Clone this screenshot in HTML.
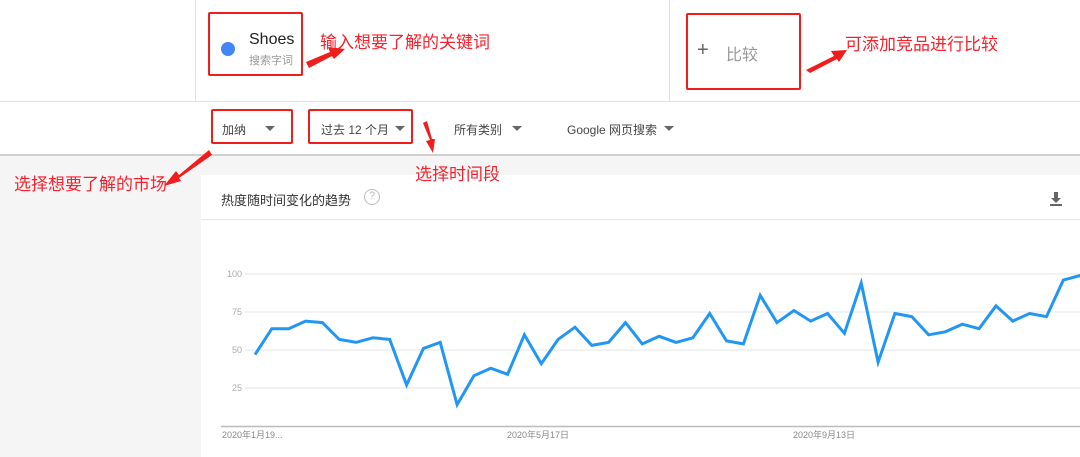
<!DOCTYPE html>
<html><head><meta charset="utf-8"><style>
*{margin:0;padding:0;box-sizing:border-box}
body{width:1080px;height:457px;overflow:hidden;background:#fff;position:relative;font-family:"Liberation Sans","Noto Sans CJK SC",sans-serif;color:#333}
.a{position:absolute;white-space:nowrap}
.red{color:#f5222d;font-size:17px}
.box{position:absolute;border:2px solid #f01d1d;border-radius:2px}
.f{font-size:12px;color:#444}
.tri{position:absolute;width:0;height:0;border-left:5px solid transparent;border-right:5px solid transparent;border-top:5px solid #666}
</style></head><body>
<div class="a" style="left:195px;top:0;width:1px;height:101px;background:#e0e0e0"></div>
<div class="a" style="left:669px;top:0;width:1px;height:101px;background:#e0e0e0"></div>
<div class="a" style="left:0;top:101px;width:1080px;height:1px;background:#e0e0e0"></div>
<div class="a" style="left:0;top:154px;width:1080px;height:2px;background:#d0d0d0"></div>
<div class="a" style="left:0;top:156px;width:1080px;height:301px;background:#f5f5f5"></div>
<div class="a" style="left:201px;top:175px;width:879px;height:282px;background:#fff"></div>
<div class="a" style="left:201px;top:219px;width:879px;height:1px;background:#e6e6e6"></div>

<div class="a" style="left:221px;top:42px;width:14px;height:14px;border-radius:50%;background:#4285f4"></div>
<div class="a" style="left:249px;top:31px;font-size:16px;color:#222">Shoes</div>
<div class="a" style="left:249px;top:52px;font-size:11px;color:#999">搜索字词</div>
<div class="box" style="left:208px;top:12px;width:95px;height:64px"></div>
<div class="a red" style="left:320px;top:28px">输入想要了解的关键词</div>
<svg class="a" style="left:0;top:0" width="1080" height="200">
<polygon points="306,62 330,52 328,47 345,49 334,59 332,56 309,68" fill="#f01d1d"/>
<polygon points="806,70 834,56 831,51 847,50 839,62 837,59 810,73" fill="#f01d1d"/>
<polygon points="209,150 179,175 176,171 164,186 181,181 179,178 212,155" fill="#f01d1d"/>
<polygon points="423,123 430,140 426,141 433,153 435,139 432,139 427,121" fill="#f01d1d"/>
</svg>
<div class="a" style="left:697px;top:39px;font-size:20px;color:#666;font-weight:300">+</div>
<div class="a" style="left:726px;top:41px;font-size:16px;color:#999">比较</div>
<div class="box" style="left:686px;top:13px;width:115px;height:77px"></div>
<div class="a red" style="left:845px;top:30px">可添加竞品进行比较</div>

<div class="a f" style="left:222px;top:121px">加纳</div><div class="tri" style="left:265px;top:126px"></div>
<div class="box" style="left:211px;top:109px;width:82px;height:35px"></div>
<div class="a f" style="left:321px;top:121px">过去 12 个月</div><div class="tri" style="left:395px;top:126px"></div>
<div class="box" style="left:308px;top:109px;width:105px;height:35px"></div>
<div class="a f" style="left:454px;top:121px">所有类别</div><div class="tri" style="left:512px;top:126px"></div>
<div class="a f" style="left:567px;top:121px">Google 网页搜索</div><div class="tri" style="left:664px;top:126px"></div>
<div class="a red" style="left:14px;top:170px">选择想要了解的市场</div>
<div class="a red" style="left:415px;top:160px">选择时间段</div>

<div class="a" style="left:221px;top:190px;font-size:13px;color:#333">热度随时间变化的趋势</div>
<div class="a" style="left:364px;top:189px;width:16px;height:16px;border:1.5px solid #bbb;border-radius:50%;font-size:11px;color:#bbb;text-align:center;line-height:13px">?</div>
<svg class="a" style="left:1049px;top:191px" width="14" height="16"><path d="M5 1h4v6h3l-5 5-5-5h3z" fill="#666"/><rect x="1" y="13" width="12" height="2" fill="#666"/></svg>

<svg class="a" style="left:0;top:0" width="1080" height="457">
<g stroke="#e6e6e6" stroke-width="1">
<line x1="245" y1="274" x2="1080" y2="274"/><line x1="245" y1="312" x2="1080" y2="312"/>
<line x1="245" y1="350" x2="1080" y2="350"/><line x1="245" y1="388" x2="1080" y2="388"/>
</g>
<line x1="221" y1="426.5" x2="1080" y2="426.5" stroke="#bbb" stroke-width="1.5"/>
<g font-size="9" fill="#aaa" font-family="Liberation Sans,sans-serif" text-anchor="end">
<text x="242" y="277">100</text><text x="242" y="315">75</text><text x="242" y="353">50</text><text x="242" y="391">25</text>
</g>
<g font-size="9" fill="#888" font-family="Liberation Sans,Noto Sans CJK SC,sans-serif">
<text x="222" y="438">2020年1月19...</text><text x="507" y="438">2020年5月17日</text><text x="793" y="438">2020年9月13日</text>
</g>
<polyline id="pl" fill="none" stroke="#2196f3" stroke-width="3" stroke-linejoin="miter"/>
</svg>
<script>
var v=[47,64,64,69,68,57,55,58,57,27,51,55,14,33,38,34,60,41,57,65,53,55,68,54,59,55,58,74,56,54,86,68,76,69,74,61,94,42,74,72,60,62,67,64,79,69,74,72,96,99];
document.getElementById('pl').setAttribute('points',v.map(function(x,i){return (255+i*16.84).toFixed(1)+','+(426-x*1.52).toFixed(1)}).join(' '));
</script>
</body></html>
